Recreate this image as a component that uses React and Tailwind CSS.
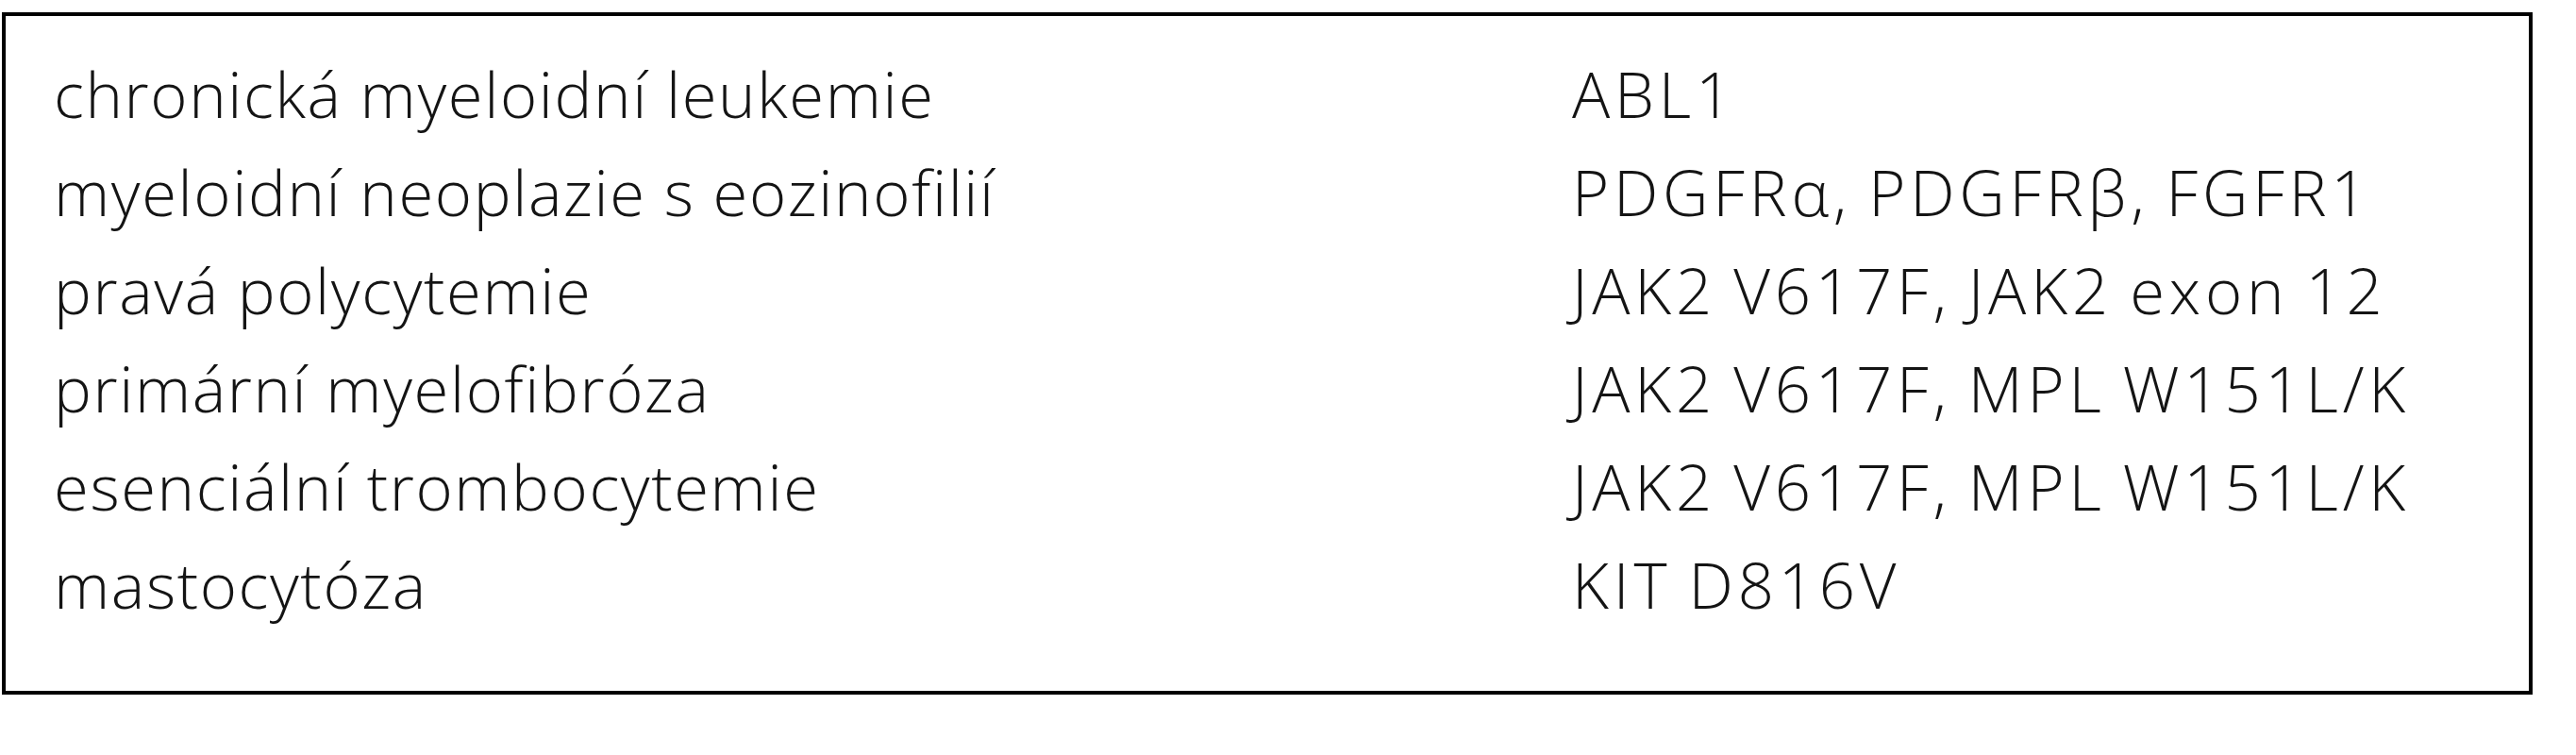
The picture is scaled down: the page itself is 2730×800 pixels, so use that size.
import React from "react";

const rows = [
  ["chronická myeloidní leukemie", "ABL1"],
  ["myeloidní neoplazie s eozinofilií", "PDGFRα, PDGFRβ, FGFR1"],
  ["pravá polycytemie", "JAK2 V617F, JAK2 exon 12"],
  ["primární myelofibróza", "JAK2 V617F, MPL W151L/K"],
  ["esenciální trombocytemie", "JAK2 V617F, MPL W151L/K"],
  ["mastocytóza", "KIT D816V"],
];

export default function App() {
  return (
    <div className="w-[2730px] h-[800px] bg-white pt-[13px] pl-[2px]">
      <div
        className="w-[2682px] h-[723px] border-[4px] border-black pt-[30px] pl-[51px] text-[#141414] font-light text-[67px] leading-[104px]"
        style={{ fontFamily: '"Open Sans", "Noto Sans", sans-serif' }}
      >
        {rows.map(([a, b]) => (
          <div key={a} className="grid grid-cols-[1609px_1fr] whitespace-nowrap">
            <div className="tracking-[1.6px]">{a}</div>
            <div className="tracking-[4.8px] [word-spacing:-4px]">{b}</div>
          </div>
        ))}
      </div>
    </div>
  );
}
